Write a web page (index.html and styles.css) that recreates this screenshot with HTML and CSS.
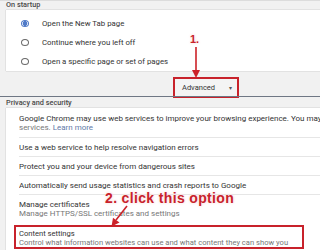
FILE: index.html
```html
<!DOCTYPE html>
<html>
<head>
<meta charset="utf-8">
<link rel="stylesheet" href="styles.css">
</head>
<body>
<div class="page">
  <div class="topbar"></div>
  <div class="sec-title">On startup</div>
  <div class="card startup">
    <div class="radio-row"><span class="radio checked"></span><span>Open the New Tab page</span></div>
    <div class="radio-row"><span class="radio"></span><span>Continue where you left off</span></div>
    <div class="radio-row"><span class="radio"></span><span>Open a specific page or set of pages</span></div>
  </div>
  <div class="adv-area">
    <div class="adv-btn"><span>Advanced</span><span class="caret">&#9662;</span></div>
  </div>
  <div class="privacy">
    <div class="sec-title sec2">Privacy and security</div>
    <div class="card list">
      <div class="row r-two first">
        <div class="line">Google Chrome may use web services to improve your browsing experience. You may op</div>
        <div class="line sub">services. <span class="link">Learn more</span></div>
      </div>
      <div class="row r-one">Use a web service to help resolve navigation errors</div>
      <div class="row r-one">Protect you and your device from dangerous sites</div>
      <div class="row r-one">Automatically send usage statistics and crash reports to Google</div>
      <div class="row r-two cert">
        <div class="line">Manage certificates</div>
        <div class="line sub">Manage HTTPS/SSL certificates and settings</div>
      </div>
      <div class="row highlight">
        <div class="line">Content settings</div>
        <div class="line sub">Control what information websites can use and what content they can show you</div>
      </div>
    </div>
  </div>

  <div class="note note1">1.</div>
  <div class="note note2">2. click this option</div>
  <svg class="arrows" width="320" height="250" viewBox="0 0 320 250">
    <line x1="196" y1="47" x2="196" y2="72" stroke="#cc2229" stroke-width="1.6"/>
    <polygon points="192,70 200,70 196,78" fill="#cc2229"/>
    <line x1="127" y1="206" x2="116" y2="220" stroke="#cc2229" stroke-width="1.6"/>
    <polygon points="119.5,222.5 113,217.8 111.5,226.5" fill="#cc2229"/>
  </svg>
</div>
</body>
</html>
```

FILE: styles.css
```css
* { box-sizing: border-box; }
html, body { margin: 0; padding: 0; }
body {
  width: 320px;
  height: 250px;
  overflow: hidden;
  background: #f1f1f1;
  font-family: Roboto, "Liberation Sans", sans-serif;
  color: #333;
}
.page {
  position: relative;
  width: 320px;
  height: 250px;
  overflow: hidden;
}
.topbar {
  height: 1px;
  background: #dcdcdc;
}
.sec-title {
  height: 9px;
  padding-left: 6px;
  font-size: 7.3px;
  line-height: 7px;
  color: #4a4a4a;
  font-weight: 500;
}
.card {
  margin-left: 6px;
  background: #fff;
  box-shadow: 0 0 1px 0 rgba(0, 0, 0, 0.35);
}
.startup {
  padding-top: 4px;
  height: 61px;
}
.radio-row {
  height: 19px;
  display: flex;
  align-items: center;
  font-size: 7.8px;
  color: #333;
  white-space: nowrap;
}
.radio {
  width: 8px;
  height: 7px;
  border-radius: 50%;
  border: 1.3px solid #6a6a6a;
  margin-left: 15px;
  margin-right: 13px;
  flex: none;
}
.radio.checked {
  border-color: #4f7ac7;
  background: radial-gradient(circle, #4f7ac7 0 2.2px, #fff 2.6px);
}
.adv-area {
  height: 26px;
  padding-top: 6px;
  padding-left: 173px;
}
.adv-btn {
  width: 66px;
  height: 21px;
  border: 2px solid #c8222b;
  display: flex;
  align-items: center;
  justify-content: space-between;
  padding: 0 5px 0 7px;
  font-size: 7.5px;
  color: #333;
  background: #f4f4f4;
}
.caret {
  font-size: 6px;
  color: #555;
}
.privacy {
  border-top: 1px solid #6f7784;
  margin-top: -1px;
}
.sec2 {
  height: 11px;
  padding-top: 1px;
  line-height: 9px;
}
.list {
  height: 200px;
}
.row {
  margin-left: 13px;
  font-size: 8px;
  white-space: nowrap;
  overflow: hidden;
  color: #333;
}
.r-one {
  height: 19px;
  line-height: 19px;
  border-top: 1px solid #e6e6e6;
}
.r-two {
  height: 28px;
  padding-top: 5px;
  border-top: 1px solid #e6e6e6;
}
.r-two.first {
  height: 29px;
  border-top: none;
  padding-top: 6px;
}
.line {
  height: 9px;
  line-height: 9px;
  overflow: hidden;
}
.sub {
  color: #777;
}
.link {
  color: #5f79a8;
}
.highlight {
  margin-left: 8px;
  margin-right: 16px;
  margin-top: 3px;
  height: 24px;
  border: 2px solid #c8222b;
  padding-left: 3px;
  padding-top: 2px;
  font-size: 7.6px;
}
.note {
  position: absolute;
  color: #c8222b;
  font-family: "Liberation Sans", Arial, sans-serif;
  font-weight: bold;
  text-shadow: 0 0 2px #fff, 0 0 3px #f6c6c6, 0 0 1px #fff;
  white-space: nowrap;
}
.note1 {
  left: 190px;
  top: 33px;
  font-size: 11px;
}
.note2 {
  left: 105px;
  top: 190px;
  font-size: 14px;
  letter-spacing: 0.35px;
}
.arrows {
  position: absolute;
  left: 0;
  top: 0;
  pointer-events: none;
}
```
